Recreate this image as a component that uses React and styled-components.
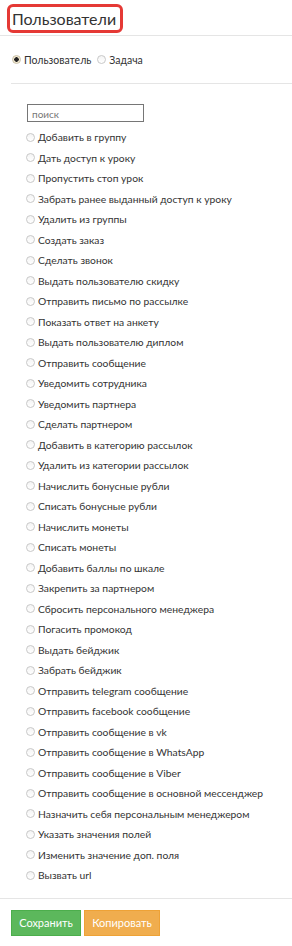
import React from "react";
import styled, { createGlobalStyle } from "styled-components";

const actions = [
  "Добавить в группу",
  "Дать доступ к уроку",
  "Пропустить стоп урок",
  "Забрать ранее выданный доступ к уроку",
  "Удалить из группы",
  "Создать заказ",
  "Сделать звонок",
  "Выдать пользователю скидку",
  "Отправить письмо по рассылке",
  "Показать ответ на анкету",
  "Выдать пользователю диплом",
  "Отправить сообщение",
  "Уведомить сотрудника",
  "Уведомить партнера",
  "Сделать партнером",
  "Добавить в категорию рассылок",
  "Удалить из категории рассылок",
  "Начислить бонусные рубли",
  "Списать бонусные рубли",
  "Начислить монеты",
  "Списать монеты",
  "Добавить баллы по шкале",
  "Закрепить за партнером",
  "Сбросить персонального менеджера",
  "Погасить промокод",
  "Выдать бейджик",
  "Забрать бейджик",
  "Отправить telegram сообщение",
  "Отправить facebook сообщение",
  "Отправить сообщение в vk",
  "Отправить сообщение в WhatsApp",
  "Отправить сообщение в Viber",
  "Отправить сообщение в основной мессенджер",
  "Назначить себя персональным менеджером",
  "Указать значения полей",
  "Изменить значение доп. поля",
  "Вызвать url",
];

const App = () => {
  return (
    <>
      <GlobalStyle />
      <Page>
        <Header>
          <TitleBox>Пользователи</TitleBox>
        </Header>
        <Divider />
        <TypeRow>
          <RadioLabel>
            <Radio checked />
            Пользователь
          </RadioLabel>
          <RadioLabel>
            <Radio />
            Задача
          </RadioLabel>
        </TypeRow>
        <Divider indent={11} />
        <ActionList>
          <SearchInput placeholder="поиск" />
          {actions.map((item, idx) => (
            <ActionItem key={idx}>
              <Radio />
              {item}
            </ActionItem>
          ))}
        </ActionList>
        <Divider />
        <Footer>
          <Button color="#5cb85c" border="#4cae4c" width={70}>
            Сохранить
          </Button>
          <Button color="#f0ad4e" border="#eea236" width={76}>
            Копировать
          </Button>
        </Footer>
      </Page>
    </>
  );
};

const GlobalStyle = createGlobalStyle`
  body {
    margin: 0;
    background: #fff;
    font-family: Lato, "Liberation Sans", sans-serif;
    color: #333;
  }
`;

const Page = styled.div`
  width: 292px;
  display: flex;
  flex-direction: column;
`;

const Header = styled.div`
  padding: 4px 0 0 7px;
  height: 35px;
  box-sizing: border-box;
`;

const TitleBox = styled.div`
  display: inline-flex;
  align-items: center;
  height: 29px;
  box-sizing: border-box;
  padding: 0 4px 1px 2px;
  border: 3px solid #e53935;
  border-radius: 6px;
  font-size: 16px;
  color: #333;
  white-space: nowrap;
`;

const Divider = styled.div`
  height: 1px;
  background: #e5e5e5;
  margin-left: ${(p) => p.indent || 0}px;
`;

const TypeRow = styled.div`
  display: flex;
  align-items: center;
  gap: 6px;
  height: 47px;
  padding-left: 12px;
  box-sizing: border-box;
`;

const RadioLabel = styled.label`
  display: flex;
  align-items: center;
  gap: 3px;
  font-size: 10.5px;
  color: #333;
`;

const Radio = styled.span`
  width: 9px;
  height: 9px;
  box-sizing: border-box;
  border-radius: 50%;
  border: 1px solid ${(p) => (p.checked ? "#c9c0a8" : "#c8c8c8")};
  background: ${(p) =>
    p.checked
      ? "radial-gradient(circle, #222 0 2px, #f3ead2 2.5px)"
      : "linear-gradient(#f4f4f4, #fff)"};
  flex-shrink: 0;
`;

const ActionList = styled.div`
  display: flex;
  flex-direction: column;
  padding: 20px 0 12px 26px;
`;

const SearchInput = styled.input`
  width: 117px;
  height: 18px;
  box-sizing: border-box;
  border: 1px solid #767676;
  border-radius: 0;
  padding: 1px 4px 0;
  margin: 0 0 0 1px;
  font-family: Lato, "Liberation Sans", sans-serif;
  font-size: 10px;
  outline: none;
  &::placeholder {
    color: #777;
  }
`;

const ActionItem = styled.label`
  display: flex;
  align-items: center;
  gap: 3px;
  height: 20.5px;
  font-size: 10.3px;
  color: #333;
  white-space: nowrap;
  &:first-of-type {
    margin-top: 5px;
  }
`;

const Footer = styled.div`
  display: flex;
  gap: 3px;
  padding: 11px 0 8px 11px;
`;

const Button = styled.button`
  width: ${(p) => p.width}px;
  height: 26px;
  box-sizing: border-box;
  background: ${(p) => p.color};
  border: 1px solid ${(p) => p.border};
  border-radius: 0;
  color: #fff;
  font-family: Lato, "Liberation Sans", sans-serif;
  font-size: 11px;
  padding: 0;
  cursor: pointer;
`;

export default App;
